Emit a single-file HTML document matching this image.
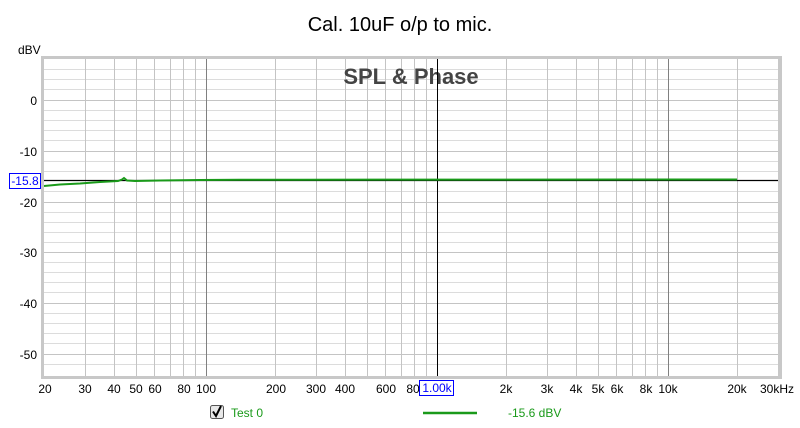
<!DOCTYPE html>
<html><head><meta charset="utf-8"><style>
html,body{margin:0;padding:0;background:#fff;}
svg{display:block;font-family:"Liberation Sans",sans-serif;}
</style></head><body>
<svg width="800" height="428" viewBox="0 0 800 428" xmlns="http://www.w3.org/2000/svg">
<rect width="800" height="428" fill="#fff"/>
<text x="400" y="31" font-size="20" text-anchor="middle" fill="#000">Cal. 10uF o/p to mic.</text>
<text x="18" y="54" font-size="12" fill="#000">dBV</text>
<!-- frame shadow -->
<rect x="41" y="56" width="741" height="323" fill="#c8c8c8"/>
<rect x="44" y="59" width="734" height="317" fill="#fff"/>
<g stroke="#dcdcdc" stroke-width="1">
<path d="M44 69.5H778M44 79.5H778M44 89.5H778M44 110.5H778M44 120.5H778M44 130.5H778M44 140.5H778M44 161.5H778M44 171.5H778M44 191.5H778M44 212.5H778M44 222.5H778M44 232.5H778M44 242.5H778M44 262.5H778M44 272.5H778M44 282.5H778M44 292.5H778M44 313.5H778M44 323.5H778M44 333.5H778M44 343.5H778M44 364.5H778"/>
</g>
<g stroke="#c4c4c4" stroke-width="1">
<path d="M44 100.5H778M44 151.5H778M44 202.5H778M44 252.5H778M44 303.5H778M44 354.5H778"/>
<path d="M85.5 59V376M114.5 59V376M136.5 59V376M154.5 59V376M170.5 59V376M183.5 59V376M195.5 59V376M275.5 59V376M316.5 59V376M345.5 59V376M367.5 59V376M385.5 59V376M401.5 59V376M414.5 59V376M426.5 59V376M506.5 59V376M547.5 59V376M576.5 59V376M598.5 59V376M616.5 59V376M632.5 59V376M645.5 59V376M657.5 59V376M737.5 59V376"/>
</g>
<g stroke="#808080" stroke-width="1"><path d="M206.5 59V376M668.5 59V376"/></g>
<text x="411" y="84" font-size="22" font-weight="bold" text-anchor="middle" fill="#444">SPL &amp; Phase</text>
<path d="M437.5 59V376" stroke="#000" stroke-width="1"/>
<path d="M44 180.5H778" stroke="#000" stroke-width="1.2"/>
<path d="M44 186 L60 184.5 L80 183.5 L100 182 L118 181 L122 179.5 L124 178 L127 180.5 L135 181 L160 180.5 L200 180 L240 179.7 L300 179.7 L737 179.5" fill="none" stroke="#1a9a1a" stroke-width="2"/>
<!-- y labels -->
<g font-size="12" text-anchor="end" fill="#000">
<text x="37" y="105">0</text><text x="37" y="156">-10</text><text x="37" y="207">-20</text><text x="37" y="257">-30</text><text x="37" y="308">-40</text><text x="37" y="359">-50</text>
</g>
<rect x="9.5" y="173.5" width="31" height="15" fill="#fff" stroke="#0000ff"/>
<text x="25" y="185" font-size="12" text-anchor="middle" fill="#0000ff">-15.8</text>
<!-- x labels -->
<g font-size="12" text-anchor="middle" fill="#000">
<text x="45" y="393">20</text><text x="85" y="393">30</text><text x="114" y="393">40</text><text x="136" y="393">50</text><text x="155" y="393">60</text><text x="184" y="393">80</text><text x="206" y="393">100</text>
<text x="276" y="393">200</text><text x="316" y="393">300</text><text x="345" y="393">400</text><text x="386" y="393">600</text><text x="413" y="393">80</text>
<text x="506" y="393">2k</text><text x="547" y="393">3k</text><text x="576" y="393">4k</text><text x="598" y="393">5k</text><text x="617" y="393">6k</text><text x="646" y="393">8k</text><text x="668" y="393">10k</text><text x="737" y="393">20k</text><text x="777" y="393">30kHz</text>
</g>
<rect x="419.5" y="380.5" width="34" height="15" fill="#fff" stroke="#0000ff"/>
<text x="437" y="392" font-size="12" text-anchor="middle" fill="#0000ff">1.00k</text>
<!-- legend -->
<rect x="210.5" y="405.5" width="13" height="13" rx="2" fill="#e8e8e8" stroke="#555"/>
<path d="M213 411.5 L216 416 L221 406" fill="none" stroke="#000" stroke-width="2"/>
<text x="231" y="417" font-size="12" fill="#1a9a1a">Test 0</text>
<path d="M423 413H477" stroke="#1a9a1a" stroke-width="2.5"/>
<text x="508" y="417" font-size="12" fill="#1a9a1a">-15.6 dBV</text>
</svg>
</body></html>
